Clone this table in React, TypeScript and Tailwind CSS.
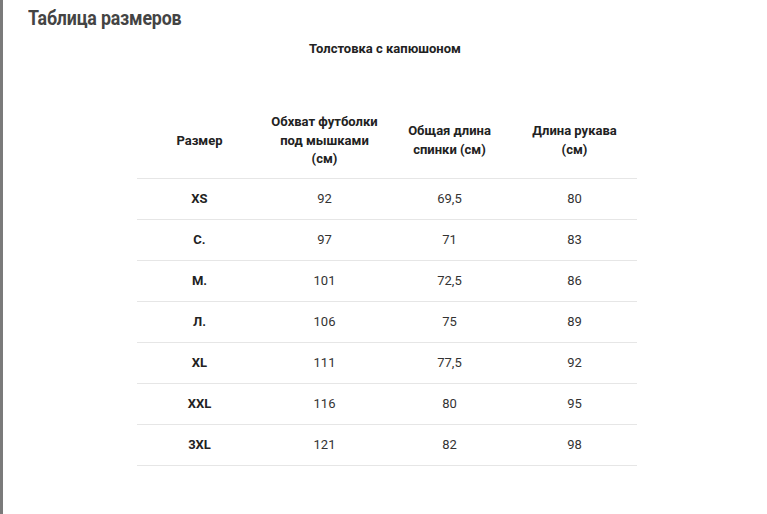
import React from "react";

const rows = [
  ["XS", "92", "69,5", "80"],
  ["С.", "97", "71", "83"],
  ["М.", "101", "72,5", "86"],
  ["Л.", "106", "75", "89"],
  ["XL", "111", "77,5", "92"],
  ["XXL", "116", "80", "95"],
  ["3XL", "121", "82", "98"],
];

export default function App() {
  return (
    <div
      className="flex h-[514px] w-[767px] bg-white"
      style={{ fontFamily: "Roboto, 'Liberation Sans', sans-serif" }}
    >
      <div className="w-[3px] shrink-0 bg-[#7a7a7a]" />
      <div className="flex flex-1 flex-col">
        <h1 className="ml-[25px] mt-[5px] origin-left scale-x-[0.89] text-[20px] font-bold leading-[26px] tracking-[-0.2px] text-[#444444]">
          Таблица размеров
        </h1>
        <div className="mt-[10px] text-center text-[13px] font-bold leading-[16px] text-[#222222]">
          Толстовка с капюшоном
        </div>
        <div className="ml-[134px] mt-[56px] w-[500px]">
          <div className="grid grid-cols-4 items-center border-b border-[#e6e6e6] pb-[9px] text-center text-[13px] font-bold leading-[18.5px] text-[#222222]">
            <div>Размер</div>
            <div>
              Обхват футболки
              <br />
              под мышками
              <br />
              (см)
            </div>
            <div>
              Общая длина
              <br />
              спинки (см)
            </div>
            <div>
              Длина рукава
              <br />
              (см)
            </div>
          </div>
          {rows.map((r) => (
            <div
              key={r[0]}
              className="grid h-[41px] grid-cols-4 items-center border-b border-[#e6e6e6] text-center text-[13px] leading-[16px] text-[#333333]"
            >
              <div className="font-bold text-[#222222]">{r[0]}</div>
              <div>{r[1]}</div>
              <div>{r[2]}</div>
              <div>{r[3]}</div>
            </div>
          ))}
        </div>
      </div>
    </div>
  );
}
